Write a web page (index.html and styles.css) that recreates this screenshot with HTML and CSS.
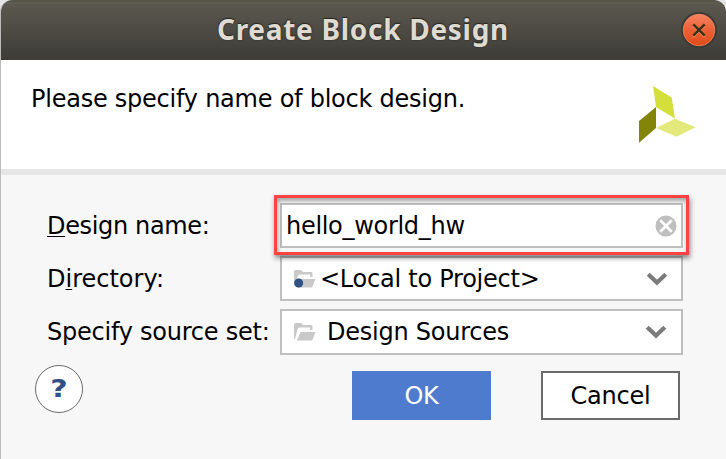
FILE: index.html
```html
<!DOCTYPE html>
<html lang="en">
<head>
<meta charset="utf-8">
<title>Create Block Design</title>
<link rel="stylesheet" href="styles.css">
</head>
<body>
<main class="dialog">
  <header class="titlebar">
    <h1 class="title">Create Block Design</h1>
    <button class="close" aria-label="Close">
      <svg width="36" height="36" viewBox="0 0 36 36">
        <defs><linearGradient id="orb" x1="0" y1="0" x2="0" y2="1"><stop offset="0" stop-color="#f58463"/><stop offset=".5" stop-color="#eb6036"/><stop offset="1" stop-color="#df4b16"/></linearGradient></defs>
        <circle cx="18" cy="18" r="18" fill="#3b3a35"/>
        <circle cx="18" cy="18" r="15.8" fill="url(#orb)" stroke="#f5875f" stroke-width=".8"/>
        <path d="M12.3 13.5l11.4 11.4M23.7 13.5L12.3 24.9" stroke="#f58b68" stroke-width="2.2"/>
        <path d="M12.3 12.3l11.4 11.4M23.7 12.3L12.3 23.7" stroke="#3b3214" stroke-width="2.5"/>
      </svg>
    </button>
  </header>
  <section class="intro">
    <p class="message">Please specify name of block design.</p>
    <svg class="logo" width="57" height="57" viewBox="0 0 57 57">
      <path d="M14 0L32.7 11.5L36 32.5L17 21Z" fill="#d5df3b"/>
      <path d="M17 21V42L0 56.8V35Z" fill="#838508"/>
      <path d="M17 42L36 32.7L56.7 41.3L37.5 50.7Z" fill="#e3e97b"/>
    </svg>
  </section>
  <section class="form">
    <div class="row">
      <label class="label design"><u>D</u>esign name:</label>
      <div class="field highlighted">
        <span class="value name">hello_world_hw</span>
        <svg class="clear" width="22" height="22" viewBox="0 0 22 22"><circle cx="11" cy="11" r="10.5" fill="#bfbfbf"/><path d="M5.2 5.2l11.6 11.6M16.8 5.2L5.2 16.8" stroke="#fff" stroke-width="2.7"/></svg>
      </div>
    </div>
    <div class="row">
      <label class="label directory">D<u>i</u>rectory:</label>
      <div class="field select">
        <svg class="folder" width="22" height="20" viewBox="0 0 22 20"><path d="M0 17V2.5Q0 1 1.5 1H7Q8 1 8.3 2L8.6 3H17Q18.5 3 18.5 4.5V8H16V5.5H6Q4 5.5 3.6 7.5L1 17Z" fill="#c9c9c9"/><path d="M6.5 10H21.5L18.8 17Q18.3 18.5 16.8 18.5H2.8Z" fill="#c9c9c9"/><circle cx="4.7" cy="14" r="4.5" fill="#315083"/></svg>
        <span class="value local">&lt;Local to Project&gt;</span>
        <svg class="chevron" width="22" height="16" viewBox="0 0 22 16"><path d="M2.2 3.2L11 11.5L19.8 3.2" fill="none" stroke="#7b7b7b" stroke-width="4.2"/></svg>
      </div>
    </div>
    <div class="row last">
      <label class="label source">Specify source set:</label>
      <div class="field select">
        <svg class="folder" width="22" height="20" viewBox="0 0 22 20"><path d="M0 17V2.5Q0 1 1.5 1H7Q8 1 8.3 2L8.6 3H17Q18.5 3 18.5 4.5V8H16V5.5H6Q4 5.5 3.6 7.5L1 17Z" fill="#c9c9c9"/><path d="M6.5 10H21.5L18.8 17Q18.3 18.5 16.8 18.5H2.8Z" fill="#c9c9c9"/></svg>
        <span class="value sources">Design Sources</span>
        <svg class="chevron" width="22" height="16" viewBox="0 0 22 16"><path d="M2.2 3.2L11 11.5L19.8 3.2" fill="none" stroke="#7b7b7b" stroke-width="4.2"/></svg>
      </div>
    </div>
  </section>
  <footer class="actions">
    <button class="help"><span class="mark">?</span></button>
    <button class="button ok">OK</button>
    <button class="button cancel">Cancel</button>
  </footer>
</main>
</body>
</html>
```
FILE: styles.css
```css
* { box-sizing: border-box; }
body { margin: 0; background: #e5e5e5; font: 24px/28px "DejaVu Sans", sans-serif; letter-spacing: -.24px; color: #000; overflow: hidden; }
button { font: inherit; letter-spacing: inherit; padding: 0; border: 0; }
.dialog { width: 726px; height: 459px; border-left: 1px solid #bcbcbc; border-radius: 12px 12px 0 0; background: #f7f7f7; overflow: hidden; }
.titlebar { display: flex; align-items: center; height: 60px; padding: 0 9px 0 216px; background: linear-gradient(#57554a 0, #57554a 2px, #605d51 2px, #5a574e 5px, #3d3c37 60px); }
.title { flex: 1; margin: -2px 0 0; font: bold 28px/38px "Noto Sans", sans-serif; letter-spacing: .7px; color: #dfdbd2; text-shadow: 0 0 2px #292824, 0 -1px 1px #292824; white-space: nowrap; }
.close { display: flex; background: none; }
.intro { display: flex; justify-content: space-between; align-items: flex-start; height: 115px; padding: 26px 30px 0; background: #fff; border-bottom: 6px solid #e6e6e6; }
.message { margin: -1px 0 0; white-space: nowrap; }
.logo { display: block; }
.form { display: grid; gap: 8px; padding: 28px 43px 0 46px; }
.row { display: grid; grid-template-columns: 233px 403px; height: 45px; align-items: center; }
.row.last { height: 46px; }
.label, .value { white-space: nowrap; justify-self: start; }
.label u { text-decoration-thickness: 1px; text-underline-offset: 2px; text-decoration-skip-ink: none; }
.design { letter-spacing: -.35px; }
.directory { letter-spacing: 0; }
.name { letter-spacing: -.3px; }
.field { display: flex; align-items: center; height: 100%; border: 2px solid #bfbfbf; background: #fff; padding: 0 13px 0 12px; }
.last .field { padding-right: 14px; }
.value { flex: 1; }
.highlighted { position: relative; padding: 0 4px; }
.highlighted::after { content: ""; position: absolute; z-index: 1; inset: -10px -8px -9px; border: 3px solid #ff4343; box-shadow: 1px 3px 5px #0007, inset 1px 3px 4px #0005; }
.folder { margin: 0 4px 0 0; }
.sources { padding-left: 7px; }
.actions { display: flex; align-items: flex-start; padding: 10px 45px 0 34px; }
.help { width: 48px; height: 48px; border: 1px solid #6b6b6b; border-radius: 50%; background: #fff; color: #315083; font: bold 24px/46px "DejaVu Sans", sans-serif; }
.mark { display: inline-block; transform: scaleX(1.25); }
.button { width: 139px; height: 49px; margin-top: 6px; }
.ok { margin-left: 269px; background: #4f7bcf; color: #fff; }
.cancel { margin-left: 50px; background: #fff; border: 2px solid #6b6b6b; }
```
